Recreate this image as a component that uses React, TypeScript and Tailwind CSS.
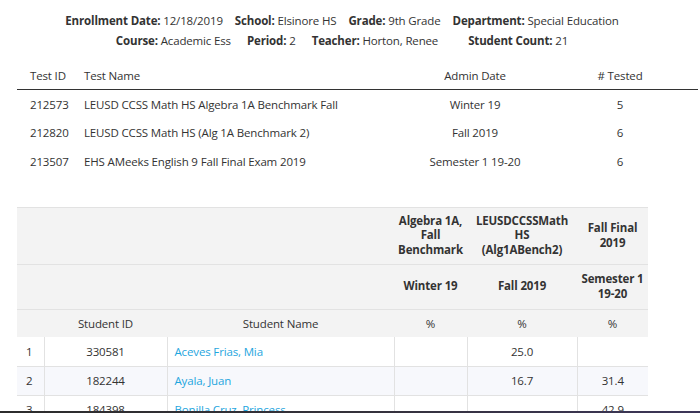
const tests = [
  { id: '212573', name: 'LEUSD CCSS Math HS Algebra 1A Benchmark Fall', admin: 'Winter 19', tested: 5 },
  { id: '212820', name: 'LEUSD CCSS Math HS (Alg 1A Benchmark 2)', admin: 'Fall 2019', tested: 6 },
  { id: '213507', name: 'EHS AMeeks English 9 Fall Final Exam 2019', admin: 'Semester 1 19-20', tested: 6 },
]

const students = [
  { no: 1, id: '330581', name: 'Aceves Frias, Mia', a: '', b: '25.0', c: '' },
  { no: 2, id: '182244', name: 'Ayala, Juan', a: '', b: '16.7', c: '31.4' },
  { no: 3, id: '184398', name: 'Bonilla Cruz, Princess', a: '', b: '', c: '42.9' },
]

function Info({ label, value, className = '' }: { label: string; value: string; className?: string }) {
  return (
    <span className={className}>
      <span className="font-bold">{label}:</span> {value}
    </span>
  )
}

export default function App() {
  return (
    <div className="relative h-[413px] overflow-hidden bg-white font-['Open_Sans',sans-serif] text-[11.5px] tracking-[-0.15px] text-[#333]">
      {/* class summary */}
      <div className="flex flex-col items-center pt-[11px] pr-[16px] leading-5">
        <div className="flex gap-3">
          <Info label="Enrollment Date" value="12/18/2019" />
          <Info label="School" value="Elsinore HS" />
          <Info label="Grade" value="9th Grade" />
          <Info label="Department" value="Special Education" />
        </div>
        <div className="flex gap-4">
          <Info label="Course" value="Academic Ess" />
          <Info label="Period" value="2" />
          <Info label="Teacher" value="Horton, Renee" />
          <Info label="Student Count" value="21" className="ml-[14px]" />
        </div>
      </div>

      {/* tests */}
      <div className="mx-[17px] mt-[11px] w-[681px]">
        <div className="grid h-[28px] grid-cols-[67px_316px_150px_140px] items-center border-b-[1.5px] border-[#333]">
          <div className="pl-[13px]">Test ID</div>
          <div>Test Name</div>
          <div className="text-center">Admin Date</div>
          <div className="text-center">&#35; Tested</div>
        </div>
        {tests.map((t) => (
          <div key={t.id} className="grid h-[28.5px] grid-cols-[67px_316px_150px_140px] items-center">
            <div className="pl-[13px]">{t.id}</div>
            <div>{t.name}</div>
            <div className="text-center">{t.admin}</div>
            <div className="text-center">{t.tested}</div>
          </div>
        ))}
      </div>

      {/* student scores */}
      <table className="mx-[17px] mt-[31px] w-[631px] table-fixed border-collapse">
        <colgroup>
          <col className="w-[27px]" />
          <col className="w-[123px]" />
          <col className="w-[227px]" />
          <col className="w-[73px]" />
          <col className="w-[110px]" />
          <col className="w-[71px]" />
        </colgroup>
        <thead className="bg-[#f3f3f3]">
          <tr className="h-[57px] border-t border-b border-[#e2e2e2] font-bold leading-[14.5px]">
            <th colSpan={3}></th>
            <th className="text-center">
              Algebra 1A,
              <br />
              Fall
              <br />
              Benchmark
            </th>
            <th className="text-center">
              LEUSDCCSSMath
              <br />
              HS
              <br />
              (Alg1ABench2)
            </th>
            <th className="text-center">
              Fall Final
              <br />
              2019
            </th>
          </tr>
          <tr className="h-[45px] border-b border-[#e2e2e2] font-bold leading-[14.5px]">
            <th colSpan={3}></th>
            <th className="text-center">Winter 19</th>
            <th className="text-center">Fall 2019</th>
            <th className="text-center">
              Semester 1
              <br />
              19-20
            </th>
          </tr>
          <tr className="h-[28px]">
            <th></th>
            <th className="text-center font-normal">Student ID</th>
            <th className="text-center font-normal">Student Name</th>
            <th className="text-center font-normal">%</th>
            <th className="text-center font-normal">%</th>
            <th className="text-center font-normal">%</th>
          </tr>
        </thead>
        <tbody>
          {students.map((s, i) => (
            <tr key={s.id} className={`h-[29px] border-b border-[#e2e2e2] ${i % 2 === 1 ? 'bg-[#f7f8fc]' : 'bg-white'}`}>
              <td className="pl-[9px]">{s.no}</td>
              <td className="border-l border-[#e2e2e2] text-center">{s.id}</td>
              <td className="border-l border-[#e2e2e2] pl-[7px] text-[#1fa6de]">{s.name}</td>
              <td className="border-l border-[#e2e2e2] text-center">{s.a}</td>
              <td className="border-l border-[#e2e2e2] text-center">{s.b}</td>
              <td className="border-l border-[#e2e2e2] text-center">{s.c}</td>
            </tr>
          ))}
        </tbody>
      </table>

      <div className="absolute bottom-0 left-0 h-[2px] w-full bg-linear-to-r from-[#2c2c2c] via-[#34313a] to-[#3c3558]" />
    </div>
  )
}
